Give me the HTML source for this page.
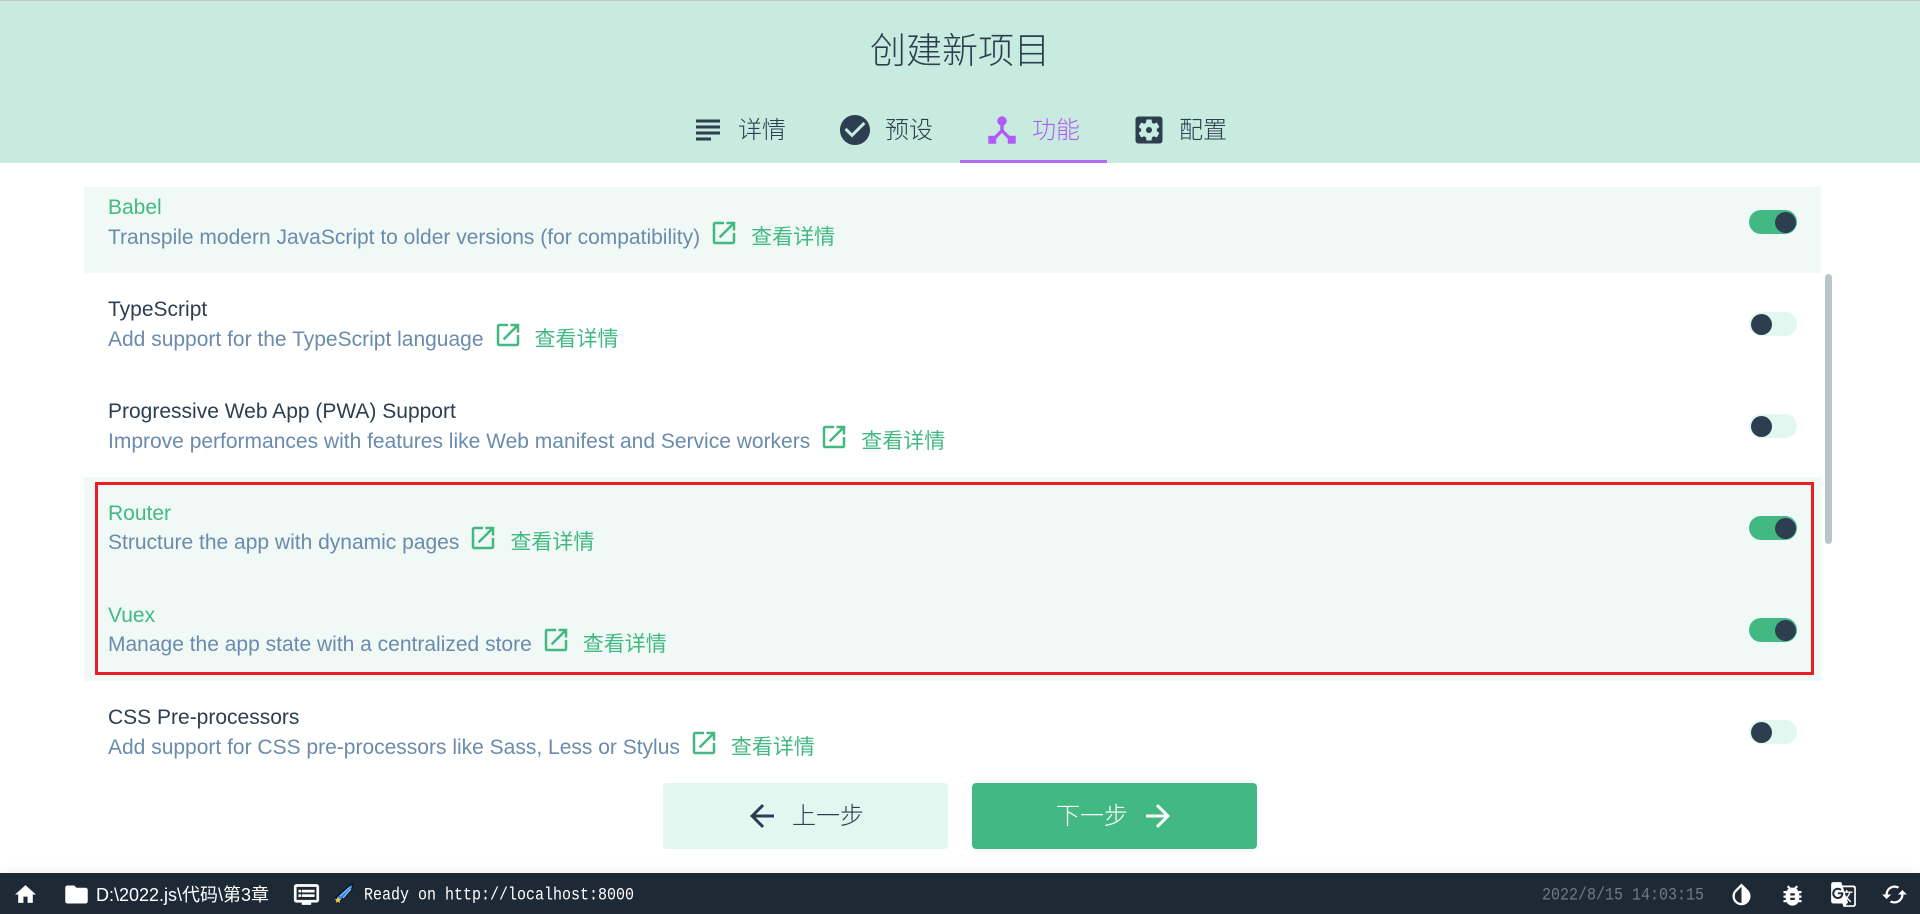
<!DOCTYPE html>
<html lang="zh-CN">
<head>
<meta charset="utf-8">
<title>创建新项目</title>
<style>
html,body{margin:0;padding:0;width:1920px;height:914px;overflow:hidden;background:#fff;}
body{position:relative;font-family:"Liberation Sans","Noto Sans CJK SC",sans-serif;color:#2c3e50;}
.abs,svg.i{position:absolute;}
#topline{left:0;top:0;width:1920px;height:1px;background:#c4c4c4;}
#header{left:0;top:1px;width:1920px;height:162px;background:#c7ebdf;}
#title{left:0;width:1920px;top:25px;text-align:center;font-size:36px;line-height:52px;font-weight:300;color:#2c3e50;white-space:nowrap;}
.tab{position:absolute;top:113px;font-size:24px;line-height:36px;white-space:nowrap;font-weight:300;}
#ul{left:960px;top:160px;width:147px;height:3px;background:#b26ef3;}
.row{position:absolute;left:84px;width:1737px;}
.sel{background:#f0f9f5;}
.name{position:absolute;left:108px;font-size:21px;line-height:24px;white-space:nowrap;color:#2c3e50;}
.name.on{color:#42b983;}
.desc{position:absolute;left:108px;font-size:21px;line-height:24px;white-space:nowrap;color:#6a8bad;display:flex;align-items:flex-start;}
.desc svg{width:30px;height:30px;fill:#42b983;margin:-8px 0 0 9px;flex:none;}
.desc b{font-weight:400;color:#42b983;font-size:21px;margin-left:12px;margin-top:0;}
.tg{position:absolute;left:1749px;width:48px;height:24px;border-radius:12px;background:#e1f7ef;}
.tg i{position:absolute;top:2px;left:2px;width:21px;height:21px;border-radius:50%;background:#2c3e50;}
.tg.on{background:#42b983;}
.tg.on i{left:26px;}
#bar{left:1825px;top:274px;width:7px;height:270px;border-radius:4px;background:#b5c6cf;}
#red{left:95px;top:482px;width:1713px;height:187px;border:3px solid #ed1c24;}
.btn{position:absolute;top:783px;width:285px;height:66px;border-radius:4px;}
.btxt{position:absolute;top:799px;font-size:24px;line-height:36px;white-space:nowrap;font-weight:300;}
#status{left:0;top:873px;width:1920px;height:41px;background:#1d2935;box-shadow:0 0 12px rgba(0,0,0,.08);}
.w{fill:#fff;}
#path{left:96px;top:880px;font-size:18px;line-height:30px;color:#fff;white-space:nowrap;}
#log{left:364px;top:882px;font:15px/28px "Liberation Mono",monospace;color:#fff;white-space:pre;transform:scaleY(1.15);transform-origin:0 50%;}
#date{left:1542px;top:882px;font:15px/28px "Liberation Mono",monospace;color:#6f7a85;white-space:pre;transform:scaleY(1.15);transform-origin:0 50%;}
</style>
</head>
<body>
<svg width="0" height="0" style="position:absolute">
<defs>
<symbol id="open" viewBox="0 0 24 24"><path d="M19 19H5V5h7V3H5c-1.11 0-2 .9-2 2v14c0 1.1.89 2 2 2h14c1.1 0 2-.9 2-2v-7h-2v7zM14 3v2h3.59l-9.83 9.83 1.41 1.41L19 6.41V10h2V3h-7z"/></symbol>
</defs>
</svg>

<div class="abs" id="header"></div>
<div class="abs" id="topline"></div>
<div class="abs" id="title">创建新项目</div>

<svg class="i" style="left:690px;top:112px" width="36" height="36" viewBox="0 0 24 24" fill="#2c3e50"><path d="M14 17H4v2h10v-2zm6-8H4v2h16V9zM4 15h16v-2H4v2zM4 5v2h16V5H4z"/></svg>
<div class="tab" style="left:738px">详情</div>
<svg class="i" style="left:837px;top:112px" width="36" height="36" viewBox="0 0 24 24" fill="#2c3e50"><path d="M12 2C6.48 2 2 6.48 2 12s4.48 10 10 10 10-4.48 10-10S17.52 2 12 2zm-2 15l-5-5 1.41-1.41L10 14.17l7.59-7.59L19 8l-9 9z"/></svg>
<div class="tab" style="left:885px">预设</div>
<svg class="i" style="left:984px;top:112px" width="36" height="36" viewBox="0 0 24 24" fill="#b15bf7" stroke="#b15bf7" stroke-width=".3"><path d="M17 16l-4-4V8.82C14.16 8.4 15 7.3 15 6c0-1.66-1.34-3-3-3S9 4.34 9 6c0 1.3.84 2.4 2 2.82V12l-4 4H3v5h5v-3.05l4-4.2 4 4.2V21h5v-5h-4z"/></svg>
<div class="tab" style="left:1032px;color:#b15bf7">功能</div>
<svg class="i" style="left:1131px;top:112px" width="36" height="36" viewBox="0 0 24 24" fill="#2c3e50"><path d="M12 10c-1.1 0-2 .9-2 2s.9 2 2 2 2-.9 2-2-.9-2-2-2zm7-7H5c-1.11 0-2 .9-2 2v14c0 1.1.89 2 2 2h14c1.11 0 2-.9 2-2V5c0-1.1-.89-2-2-2zm-1.75 9c0 .23-.02.46-.05.68l1.48 1.16c.13.11.17.3.08.45l-1.4 2.42c-.09.15-.27.21-.43.15l-1.74-.7c-.36.28-.76.51-1.18.69l-.26 1.85c-.03.17-.18.3-.35.3h-2.8c-.17 0-.32-.13-.35-.29l-.26-1.85c-.43-.18-.82-.41-1.18-.69l-1.74.7c-.16.06-.34 0-.43-.15l-1.4-2.42c-.09-.15-.05-.34.08-.45l1.48-1.16c-.03-.23-.05-.46-.05-.69 0-.23.02-.46.05-.68l-1.48-1.16c-.13-.11-.17-.3-.08-.45l1.4-2.42c.09-.15.27-.21.43-.15l1.74.7c.36-.28.76-.51 1.18-.69l.26-1.85c.03-.17.18-.3.35-.3h2.8c.17 0 .32.13.35.29l.26 1.85c.43.18.82.41 1.18.69l1.74-.7c.16-.06.34 0 .43.15l1.4 2.42c.09.15.05.34-.08.45l-1.48 1.16c.03.23.05.46.05.69z"/></svg>
<div class="tab" style="left:1179px">配置</div>
<div class="abs" id="ul"></div>

<div class="row sel" style="top:187px;height:86px"></div>
<div class="row sel" style="top:477px;height:204px"></div>

<div class="name on" style="top:196px">Babel</div>
<div class="desc" style="top:226px"><span>Transpile modern JavaScript to older versions (for compatibility)</span><svg><use href="#open"/></svg><b>查看详情</b></div>
<div class="tg on" style="top:210px"><i></i></div>

<div class="name" style="top:298px">TypeScript</div>
<div class="desc" style="top:328px"><span>Add support for the TypeScript language</span><svg><use href="#open"/></svg><b>查看详情</b></div>
<div class="tg" style="top:312px"><i></i></div>

<div class="name" style="top:400px">Progressive Web App (PWA) Support</div>
<div class="desc" style="top:430px"><span>Improve performances with features like Web manifest and Service workers</span><svg><use href="#open"/></svg><b>查看详情</b></div>
<div class="tg" style="top:414px"><i></i></div>

<div class="name on" style="top:502px">Router</div>
<div class="desc" style="top:531px"><span>Structure the app with dynamic pages</span><svg><use href="#open"/></svg><b>查看详情</b></div>
<div class="tg on" style="top:516px"><i></i></div>

<div class="name on" style="top:604px">Vuex</div>
<div class="desc" style="top:633px"><span>Manage the app state with a centralized store</span><svg><use href="#open"/></svg><b>查看详情</b></div>
<div class="tg on" style="top:618px"><i></i></div>

<div class="name" style="top:706px">CSS Pre-processors</div>
<div class="desc" style="top:736px"><span>Add support for CSS pre-processors like Sass, Less or Stylus</span><svg><use href="#open"/></svg><b>查看详情</b></div>
<div class="tg" style="top:720px"><i></i></div>

<div class="abs" id="bar"></div>
<div class="abs" id="red"></div>

<div class="btn" style="left:663px;background:#e1f7ef"></div>
<svg class="i" style="left:744px;top:798px" width="36" height="36" viewBox="0 0 24 24" fill="#2c3e50"><path d="M20 11H7.83l5.59-5.59L12 4l-8 8 8 8 1.41-1.41L7.83 13H20v-2z"/></svg>
<div class="btxt" style="left:792px">上一步</div>
<div class="btn" style="left:972px;background:#42b983"></div>
<div class="btxt" style="left:1056px;color:#fff">下一步</div>
<svg class="i" style="left:1140px;top:798px" width="36" height="36" viewBox="0 0 24 24" fill="#fff"><path d="M12 4l-1.41 1.41L16.17 11H4v2h12.17l-5.58 5.59L12 20l8-8z"/></svg>

<div class="abs" id="status"></div>
<svg class="i w" style="left:13px;top:882px" width="25" height="25" viewBox="0 0 24 24"><path d="M10 20v-6h4v6h5v-8h3L12 3 2 12h3v8z"/></svg>
<svg class="i w" style="left:63px;top:881px" width="27" height="27" viewBox="0 0 24 24"><path d="M10 4H4c-1.1 0-1.99.9-1.99 2L2 18c0 1.1.9 2 2 2h16c1.1 0 2-.9 2-2V8c0-1.1-.9-2-2-2h-8l-2-2z"/></svg>
<div class="abs" id="path">D:\2022.js\代码\第3章</div>
<svg class="i w" style="left:293px;top:881px" width="27" height="27" viewBox="0 0 24 24" stroke="#fff" stroke-width=".4"><path d="M21 3H3c-1.1 0-2 .9-2 2v12c0 1.1.9 2 2 2h5v2h8v-2h5c1.1 0 1.99-.9 1.99-2L23 5c0-1.1-.9-2-2-2zm0 14H3V5h18v12zm-2-9H8v2h11V8zm0 4H8v2h11v-2zM7 8H5v2h2V8zm0 4H5v2h2v-2z"/></svg>
<svg class="i" style="left:334px;top:883px" width="21" height="21" viewBox="0 0 21 21">
<path d="M2 14.5 15.5 2.5 19 1 18.5 5 6 18.5z" fill="#2f80e6" stroke="#07111f" stroke-width="1.2"/>
<path d="M6 13 16 4M9 15 17 6" stroke="#9fd0ff" stroke-width="1" fill="none"/>
<path d="M4 13.5l1 2.2 2.3.4-1.7 1.5.4 2.3-2-1.2-2 1.2.4-2.3L.8 16.1l2.2-.4z" fill="#f5d33c"/>
</svg>
<div class="abs" id="log">Ready on http://localhost:8000</div>
<div class="abs" id="date">2022/8/15 14:03:15</div>
<svg class="i w" style="left:1728px;top:881px" width="27" height="27" viewBox="0 0 24 24"><path d="M17.66 7.93L12 2.27 6.34 7.93c-3.12 3.12-3.12 8.19 0 11.31C7.9 20.8 9.95 21.58 12 21.58c2.05 0 4.1-.78 5.66-2.34 3.12-3.12 3.12-8.19 0-11.31zM12 19.59c-1.6 0-3.11-.62-4.24-1.76C6.62 16.69 6 15.19 6 13.59s.62-3.11 1.76-4.24L12 5.1v14.49z"/></svg>
<svg class="i w" style="left:1779px;top:882px" width="27" height="27" viewBox="0 0 24 24"><path d="M20 8h-2.81c-.45-.78-1.07-1.45-1.82-1.96L17 4.41 15.59 3l-2.17 2.17C12.96 5.06 12.49 5 12 5c-.49 0-.96.06-1.41.17L8.41 3 7 4.41l1.62 1.63C7.88 6.55 7.26 7.22 6.81 8H4v2h2.09c-.05.33-.09.66-.09 1v1H4v2h2v1c0 .34.04.67.09 1H4v2h2.81c1.04 1.79 2.97 3 5.19 3s4.15-1.21 5.19-3H20v-2h-2.09c.05-.33.09-.66.09-1v-1h2v-2h-2v-1c0-.34-.04-.67-.09-1H20V8zm-6 8h-4v-2h4v2zm0-4h-4v-2h4v2z"/></svg>
<svg class="i w" style="left:1830px;top:881px" width="27" height="27" viewBox="0 0 24 24"><path d="M21 4H11l-1-3H3c-1.1 0-2 .9-2 2v15c0 1.1.9 2 2 2h8l1 3h9c1.1 0 2-.9 2-2V6c0-1.1-.9-2-2-2zM7 16c-2.76 0-5-2.24-5-5s2.24-5 5-5c1.35 0 2.48.5 3.35 1.3L9.03 8.57c-.38-.36-1.04-.78-2.03-.78-1.74 0-3.15 1.44-3.15 3.21S5.26 14.21 7 14.21c2.01 0 2.84-1.44 2.92-2.41H7v-1.71h4.68c.07.31.12.61.12 1.02C11.8 13.97 9.89 16 7 16zm6.17-5.42h3.7c-.43 1.25-1.11 2.43-2.05 3.47-.31-.35-.6-.72-.86-1.1l-.79-2.37zm8.33 9.92c0 .55-.45 1-1 1H14l2-2.5-1.04-3.1 3.1 3.1.92-.92-3.3-3.25.02-.02c1.13-1.25 1.93-2.69 2.4-4.22H20v-1.3h-4.53V8h-1.29v1.29h-1.44L11.46 5.5h9.04c.55 0 1 .45 1 1v14z"/></svg>
<svg class="i w" style="left:1881px;top:881px;transform:rotate(90deg)" width="27" height="27" viewBox="0 0 24 24"><path d="M12 4V1L8 5l4 4V6c3.31 0 6 2.69 6 6 0 1.01-.25 1.97-.7 2.8l1.46 1.46C19.54 15.03 20 13.57 20 12c0-4.42-3.58-8-8-8zm0 14c-3.31 0-6-2.69-6-6 0-1.01.25-1.97.7-2.8L5.24 7.74C4.46 8.97 4 10.43 4 12c0 4.42 3.58 8 8 8v3l4-4-4-4v3z"/></svg>
</body>
</html>
